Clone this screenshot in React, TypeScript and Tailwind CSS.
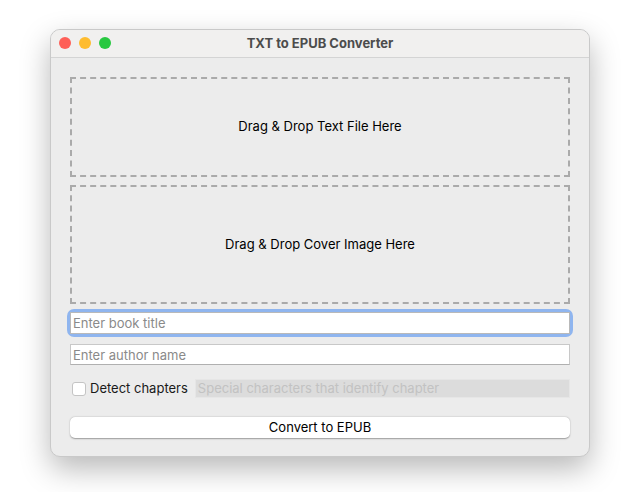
import React from 'react';

const font = { fontFamily: 'Inter, "Liberation Sans", sans-serif' };

function DropZone({ label, h }: { label: string; h: string }) {
  return (
    <div
      className={`flex ${h} items-center justify-center border-2 border-dashed border-[#aaaaaa] text-[13px] text-black`}
    >
      {label}
    </div>
  );
}

export default function App() {
  return (
    <div className="flex h-[492px] w-[630px] items-start bg-white pl-[50px] pt-[29px]" style={font}>
      <div className="flex h-[428px] w-[540px] flex-col overflow-hidden rounded-[10px] border border-[#c9c9c9] bg-[#ececec] shadow-[0_12px_30px_rgba(0,0,0,0.28)]">
        {/* title bar */}
        <div className="relative flex h-[28px] shrink-0 items-center justify-center border-b border-[#d4d4d4] bg-[#f1f0ef]">
          <div className="absolute left-[8px] top-[7px] flex gap-[8px]">
            <span className="h-[12px] w-[12px] rounded-full bg-[#fe5f57]" />
            <span className="h-[12px] w-[12px] rounded-full bg-[#febc2e]" />
            <span className="h-[12px] w-[12px] rounded-full bg-[#28c840]" />
          </div>
          <span className="text-[13px] font-bold text-[#4c4c4c]">TXT to EPUB Converter</span>
        </div>

        {/* body */}
        <div className="flex flex-col px-[19px] pt-[19px]">
          <DropZone label="Drag & Drop Text File Here" h="h-[100px]" />
          <div className="h-[8px]" />
          <DropZone label="Drag & Drop Cover Image Here" h="h-[119px]" />

          <div className="mt-[8px] rounded-[4px] ring-[3px] ring-[#8fb5ef]">
            <input
              className="block h-[22px] w-full border border-[#b9b9b9] bg-white px-[2px] text-[13px] text-black outline-none placeholder:text-[#8a8a8a]"
              placeholder="Enter book title"
            />
          </div>

          <input
            className="mt-[10px] block h-[21px] w-full border border-[#c8c8c8] border-b-[#b0b0b0] bg-white px-[2px] text-[13px] text-black outline-none placeholder:text-[#8a8a8a]"
            placeholder="Enter author name"
          />

          <div className="mt-[14px] flex h-[19px] items-center">
            <span className="ml-[2px] h-[14px] w-[14px] rounded-[3px] border border-[#c4c4c4] bg-white" />
            <span className="ml-[4px] text-[13px] text-[#1a1a1a]">Detect chapters</span>
            <div className="ml-[7px] flex h-[19px] flex-1 items-center border border-[#e6e6e6] bg-[#dcdcdc] px-[2px] text-[13px] text-[#c2c2c2]">
              Special characters that identify chapter
            </div>
          </div>

          <button className="mt-[19px] flex h-[21px] w-full items-center justify-center rounded-[5px] bg-white text-[13px] text-black shadow-[0_0.5px_1.5px_rgba(0,0,0,0.35)]">
            Convert to EPUB
          </button>
        </div>
      </div>
    </div>
  );
}
